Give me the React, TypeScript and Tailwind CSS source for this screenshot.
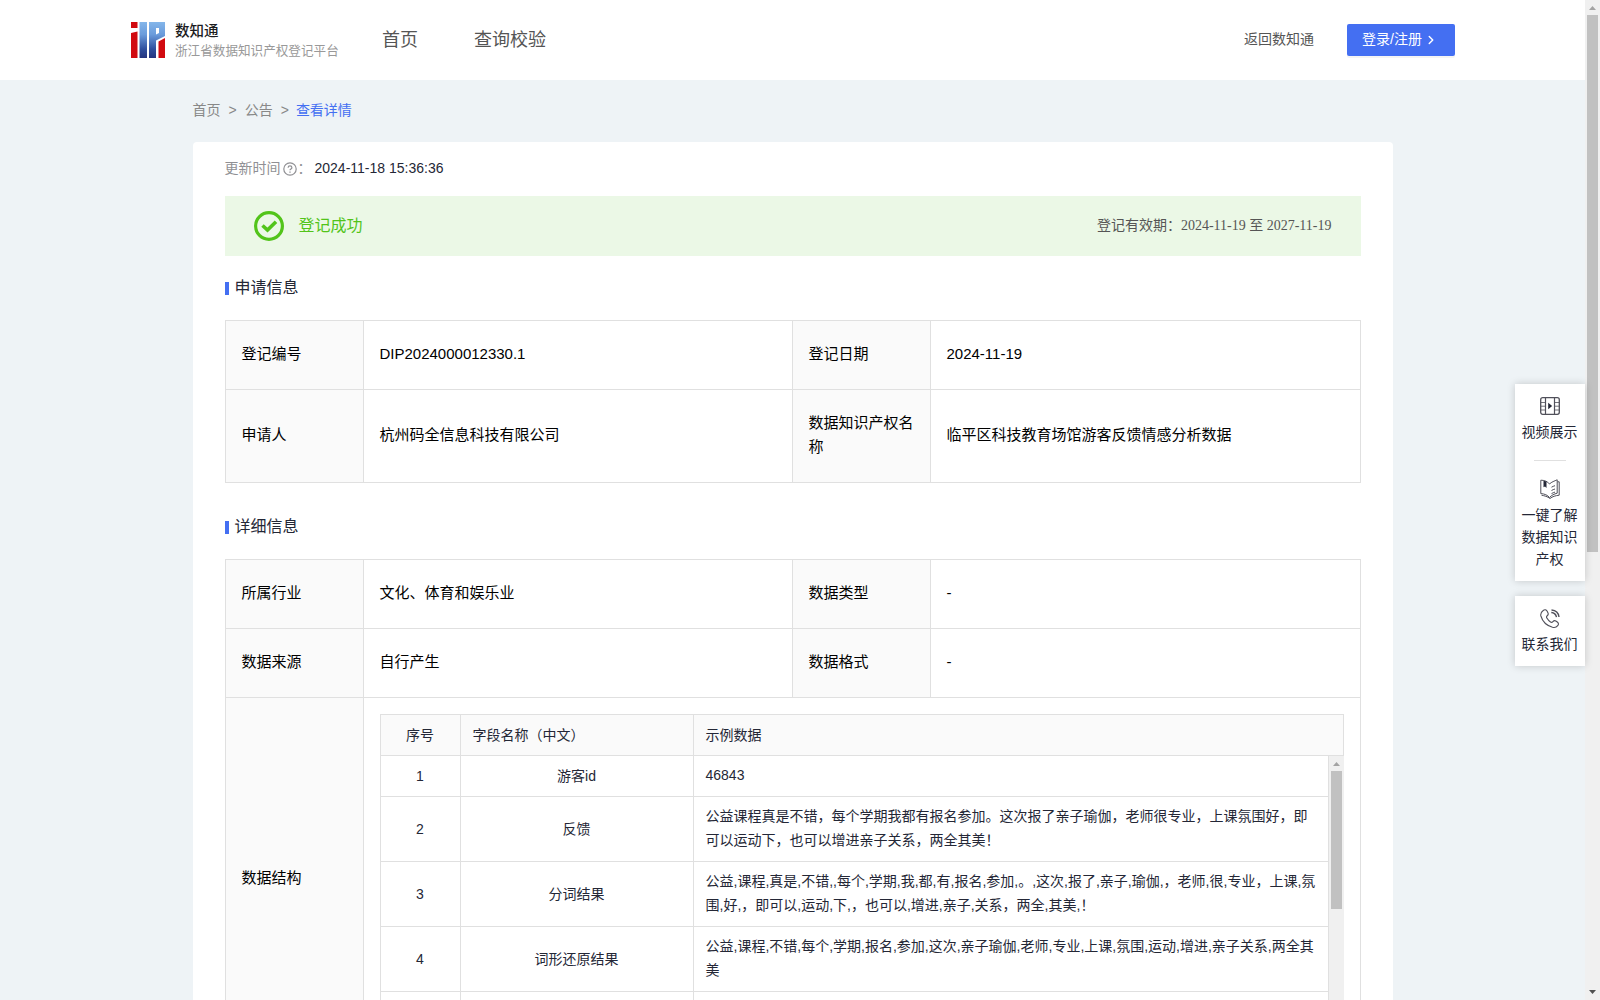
import { ChevronRight } from "lucide-react";

interface Field {
  label: string;
  value: string;
}

interface Column {
  name: string;
  sample: string;
}

const applyInfo: Field[][] = [
  [
    { label: "登记编号", value: "DIP2024000012330.1" },
    { label: "登记日期", value: "2024-11-19" },
  ],
  [
    { label: "申请人", value: "杭州码全信息科技有限公司" },
    { label: "数据知识产权名称", value: "临平区科技教育场馆游客反馈情感分析数据" },
  ],
];

const detailInfo: Field[][] = [
  [
    { label: "所属行业", value: "文化、体育和娱乐业" },
    { label: "数据类型", value: "-" },
  ],
  [
    { label: "数据来源", value: "自行产生" },
    { label: "数据格式", value: "-" },
  ],
];

const columns: Column[] = [
  { name: "游客id", sample: "46843" },
  {
    name: "反馈",
    sample:
      "公益课程真是不错，每个学期我都有报名参加。这次报了亲子瑜伽，老师很专业，上课氛围好，即\n可以运动下，也可以增进亲子关系，两全其美！",
  },
  {
    name: "分词结果",
    sample:
      "公益,课程,真是,不错,,每个,学期,我,都,有,报名,参加,。,这次,报了,亲子,瑜伽,，老师,很,专业，上课,氛\n围,好,，即可以,运动,下,，也可以,增进,亲子,关系，两全,其美,！",
  },
  {
    name: "词形还原结果",
    sample:
      "公益,课程,不错,每个,学期,报名,参加,这次,亲子瑜伽,老师,专业,上课,氛围,运动,增进,亲子关系,两全其\n美",
  },
];

function Logo() {
  return (
    <svg width="34" height="36" viewBox="0 0 34 36">
      <defs>
        <linearGradient id="logoBlue" x1="0" y1="0" x2="0" y2="36" gradientUnits="userSpaceOnUse">
          <stop offset="0" stopColor="#84b6ea" />
          <stop offset="0.35" stopColor="#6a9bdb" />
          <stop offset="0.75" stopColor="#2f4f9e" />
          <stop offset="1" stopColor="#25347f" />
        </linearGradient>
      </defs>
      <path d="M0 0h6.500v6H0zM0 11l6.500-1.500V36H0z" fill="#d10a10" />
      <path d="M8.500 0H16v36H8.500z" fill="url(#logoBlue)" />
      <path d="M18 0h16v14L25 18.500V36h-7z" fill="url(#logoBlue)" />
      <path d="M25 6h3v5l-3 1.500z" fill="#fff" />
      <path d="M27.500 19.500L34 16v20h-6.500z" fill="#d10a10" />
    </svg>
  );
}

function SectionTitle({ title }: { title: string }) {
  return (
    <div className="flex h-6 items-center">
      <span className="mt-[3px] h-[13px] w-1 bg-[#446ff2]" />
      <h2 className="ml-1.5 pt-px text-[16px] leading-6 text-[#242736]">{title}</h2>
    </div>
  );
}

function FieldRow({ fields }: { fields: Field[] }) {
  return (
    <tr>
      {fields.map((field) => [
        <th
          key={field.label}
          className="border border-[#e0e0e0] bg-[#fafafa] px-4 pt-[21px] pb-[23px] text-left font-normal"
        >
          {field.label}
        </th>,
        <td key={field.label + "-value"} className="border border-[#e0e0e0] px-4 pt-[21px] pb-[23px]">
          {field.value}
        </td>,
      ])}
    </tr>
  );
}

function FieldCols() {
  return (
    <colgroup>
      <col className="w-[138px]" />
      <col className="w-[429px]" />
      <col className="w-[138px]" />
      <col className="w-[430px]" />
    </colgroup>
  );
}

function ScrollArrow({ down = false }: { down?: boolean }) {
  return (
    <svg width="15" height="15" viewBox="0 0 15 15" className="block shrink-0">
      {down ? <path d="M4 5h7L7.500 9z" fill="#505050" /> : <path d="M4 10h7L7.500 6z" fill="#a3a3a3" />}
    </svg>
  );
}

function StructureTable() {
  return (
    <div className="flex h-[329px] flex-col text-[14px] leading-6 text-[#242736]">
      <div className="flex h-[42px] shrink-0 items-center border border-[#e0e0e0] bg-[#fafafa]">
        <div className="flex h-full w-20 items-center justify-center border-r border-[#e0e0e0] pb-px">
          序号
        </div>
        <div className="flex h-full w-[233px] items-center border-r border-[#e0e0e0] pb-px pl-3">
          字段名称（中文）
        </div>
        <div className="pb-px pl-3">示例数据</div>
      </div>
      <div className="flex min-h-0 flex-1 overflow-hidden">
        <div className="flex flex-1 flex-col border-x border-[#e0e0e0]">
          {columns.map((column, index) => (
            <div key={column.name} className="flex border-b border-[#e0e0e0]">
              <div className="flex w-20 items-center justify-center border-r border-[#e0e0e0]">
                {index + 1}
              </div>
              <div className="flex w-[233px] items-center justify-center border-r border-[#e0e0e0] pb-px">
                {column.name}
              </div>
              <div className="flex-1 whitespace-pre pt-[7px] pb-[9px] pl-3">{column.sample}</div>
            </div>
          ))}
          <div className="flex flex-1">
            <div className="w-20 border-r border-[#e0e0e0]" />
            <div className="w-[233px] border-r border-[#e0e0e0]" />
          </div>
        </div>
        <div className="flex w-[15px] flex-col items-center bg-[#f0f0f0]">
          <ScrollArrow />
          <div className="h-[138px] w-[11px] bg-[#c1c1c1]" />
        </div>
      </div>
    </div>
  );
}

function VideoIcon() {
  return (
    <svg width="20" height="18" viewBox="0 0 20 18" fill="none" stroke="#50505a">
      <rect x="0.7" y="0.7" width="18.600" height="16.600" rx="2" strokeWidth="1.300" />
      <path d="M5.500 1v16M14.500 1v16" strokeWidth="1.200" />
      <path d="M1 5.500h4.500M1 9.200h4.500M1 13h4.500M14.500 5.500H19M14.500 9.200H19M14.500 13H19" strokeWidth="0.8" />
      <path d="M8.200 5.800v6.400l4-3.200z" fill="#242736" stroke="none" />
    </svg>
  );
}

function BookIcon() {
  return (
    <svg width="20" height="20" viewBox="0 0 20 20" fill="none" stroke="#50505a">
      <path d="M.8 1.200C4 1.200 7.500 2.200 9.500 5 11.500 3 14.500 2 17.200.8v13.400c-3 .8-5.700 2-7.700 4.300-2-2.500-5-3.700-8.700-3.900z" />
      <path d="M17.500 2.800h1.700v13.400c-3.700.4-6.700 1.300-9.200 3.300-2.500-2-5.500-2.700-8.500-3.300" />
      <path d="M11.500 8.200c1.200-.7 2.200-1.100 3.500-1.500M11.500 11.500c1.200-.7 2.200-1.100 3.500-1.500M11.500 14.600c1.200-.7 2.200-1.100 3.500-1.500" />
      <path d="M3.500 1.800l3 .8v6.500L5 7.400 3.500 8.300z" fill="#242736" stroke="none" />
    </svg>
  );
}

function PhoneIcon() {
  return (
    <svg width="20" height="20" viewBox="0 0 20 20" fill="none" stroke="#50505a" strokeWidth="1.100">
      <path d="M3.200 1.500c1.600-1.300 3-.8 4 .8l.8 1.600c.6 1.200.2 2-.8 2.800-.9.700-.9 1.400-.3 2.400.9 1.600 2 2.900 3.600 3.900 1 .6 1.600.5 2.400-.4.9-1 1.800-1.300 2.900-.6l1.500 1c1.400 1 1.500 2.300.4 3.700-1.200 1.600-3 2.200-5.200 1.600C6.500 16.500 2.500 12.500.9 7 .3 4.700 1.300 2.900 3.200 1.500z" />
      <path d="M11.500 1c4 .3 7 3 7.500 7M11.300 3.500c2.700.2 4.700 2 5.200 4.700" strokeWidth="1.400" />
    </svg>
  );
}

function SideBar() {
  return (
    <div className="absolute top-[384px] right-[15px] flex w-[70px] flex-col gap-[15px] text-center text-[14px] leading-[22px] text-[#242736]">
      <div className="flex h-[197px] flex-col items-center bg-white pt-[13px] shadow-[0_0_8px_rgba(0,0,0,0.18)]">
        <VideoIcon />
        <p className="mt-[6px] pr-px">视频展示</p>
        <div className="mt-[17px] h-px w-8 bg-[#e0e0e0]" />
        <div className="mt-[18px]">
          <BookIcon />
        </div>
        <p className="mt-[5px] mr-px w-14">一键了解数据知识产权</p>
      </div>
      <div className="flex h-[70px] flex-col items-center bg-white pt-[13px] shadow-[0_0_8px_rgba(0,0,0,0.18)]">
        <PhoneIcon />
        <p className="mt-1 pr-px">联系我们</p>
      </div>
    </div>
  );
}

function App() {
  return (
    <div className="relative flex h-[1000px] w-[1600px] overflow-hidden bg-[#eef3f6] font-['Liberation_Sans','Noto_Sans_CJK_SC',sans-serif] [text-spacing-trim:space-all]">
      <div className="w-[1585px] shrink-0">
        <header className="flex h-20 items-center bg-white pl-[131px] pr-[130px]">
          <Logo />
          <div className="ml-[10px] w-[164px] whitespace-nowrap pt-[2px]">
            <p className="text-[14.5px] leading-5 font-medium text-[#1c1c1e]">数知通</p>
            <p className="text-[12.6px] leading-5 text-[#999]">浙江省数据知识产权登记平台</p>
          </div>
          <nav className="ml-[43px] flex gap-14 text-[18px] leading-6 text-[#555]">
            <a>首页</a>
            <a>查询校验</a>
          </nav>
          <a className="mr-px ml-auto pb-px text-[14px] text-[#555]">返回数知通</a>
          <button className="ml-8 flex h-8 w-[108px] items-center rounded-[2px] bg-[#446ff2] pb-px pl-[15px] text-[14px] text-white shadow-[0_2px_0_rgba(0,0,0,0.045)]">
            登录/注册
            <ChevronRight size={14} strokeWidth={2.5} className="ml-[2px]" />
          </button>
        </header>

        <main className="mx-auto w-[1200px]">
          <div className="flex h-[62px] items-center gap-2 pb-px text-[14px] text-[#888]">
            <span>首页</span>
            <span>&gt;</span>
            <span>公告</span>
            <span>&gt;</span>
            <span className="-ml-px text-[#446ff2]">查看详情</span>
          </div>

          <div className="rounded-t bg-white px-8 pt-[14px]">
            <div className="flex h-6 items-center text-[14px] text-[#909094]">
              更新时间
              <svg width="14" height="14" viewBox="0 0 14 14" className="mt-px ml-[2px]" fill="none" stroke="#909094">
                <circle cx="7" cy="7" r="6.200" strokeWidth="1.200" />
                <path d="M5.100 5.700c0-2.400 3.800-2.400 3.800 0 0 1.300-1.900 1.300-1.900 2.600" strokeWidth="1.200" />
                <path d="M7 9.500v1.200" strokeWidth="1.300" />
              </svg>
              <span className="ml-px">：</span>
              <span className="ml-[3px] text-[#242736]">2024-11-18 15:36:36</span>
            </div>

            <div className="mt-4 flex h-[60px] items-center bg-[#ebf8e6] px-[29px]">
              <svg width="30" height="30" viewBox="0 0 30 30" fill="none" stroke="#52c41a">
                <circle cx="15" cy="15" r="13.400" strokeWidth="3.200" />
                <path d="M8.500 14.500l5 4.600 8.500-8.300" strokeWidth="3.600" />
              </svg>
              <span className="ml-[15px] text-[16px] text-[#52c41a]">登记成功</span>
              <span className="ml-auto pb-[2px] font-['Liberation_Serif','Noto_Sans_CJK_SC',serif] text-[14px] text-[#555]">
                登记有效期：2024-11-19 至 2027-11-19
              </span>
            </div>

            <div className="mt-[19px]">
              <SectionTitle title="申请信息" />
            </div>
            <table className="mt-[21px] w-[1136px] table-fixed border-collapse text-[15px] leading-6 text-black">
              <FieldCols />
              <tbody>
                {applyInfo.map((fields, index) => (
                  <FieldRow key={index} fields={fields} />
                ))}
              </tbody>
            </table>

            <div className="mt-[31px]">
              <SectionTitle title="详细信息" />
            </div>
            <table className="mt-[21px] w-[1136px] table-fixed border-collapse text-[15px] leading-6 text-black">
              <FieldCols />
              <tbody>
                {detailInfo.map((fields, index) => (
                  <FieldRow key={index} fields={fields} />
                ))}
                <tr>
                  <th className="border border-[#e0e0e0] bg-[#fafafa] px-4 pb-[2px] text-left font-normal">
                    数据结构
                  </th>
                  <td colSpan={3} className="border border-[#e0e0e0] p-4">
                    <StructureTable />
                  </td>
                </tr>
              </tbody>
            </table>
          </div>
        </main>
      </div>

      <div className="flex w-[15px] flex-col items-center bg-[#f0f0f0]">
        <ScrollArrow />
        <div className="h-[537px] w-[11px] bg-[#c1c1c1]" />
        <div className="mt-auto">
          <ScrollArrow down />
        </div>
      </div>

      <SideBar />
    </div>
  );
}

export default App;
